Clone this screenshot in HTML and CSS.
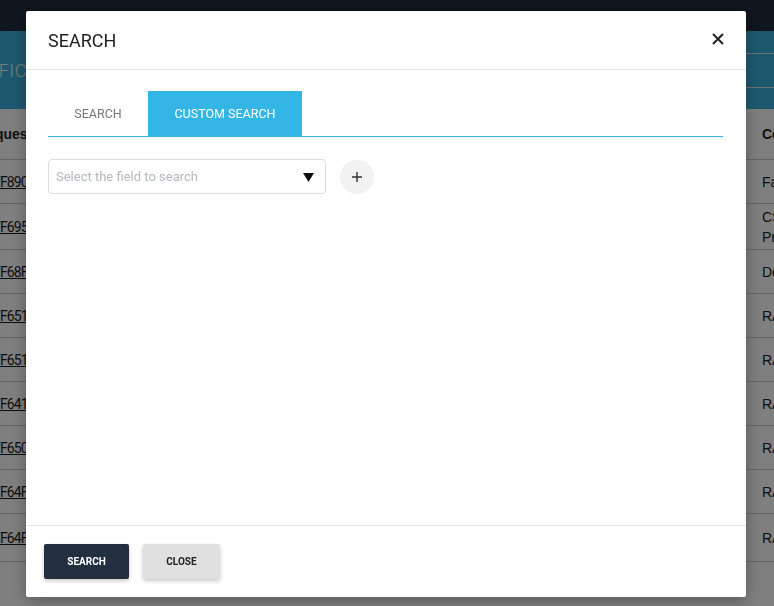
FILE: index.html
```html
<!DOCTYPE html>
<html lang="en">
<head>
    <meta charset="UTF-8">
    <meta name="viewport" content="width=device-width, initial-scale=1.0">
    <title>Certificates - Search</title>
    <link rel="stylesheet" href="styles.css">
</head>
<body>
    <div class="navbar"></div>
    <div class="page-head">
        <h1 class="page-title">CERTIFICATES</h1>
        <div class="head-tools"></div>
    </div>

    <table class="list">
        <colgroup>
            <col class="col-id">
            <col class="col-mid">
            <col class="col-type">
        </colgroup>
        <thead>
            <tr>
                <th class="th-id">Request ID</th>
                <th></th>
                <th>Certificate</th>
            </tr>
        </thead>
        <tbody>
            <tr><td><a href="#">7F890D21</a></td><td></td><td>Fabrication</td></tr>
            <tr class="tall"><td><a href="#">7F695C10</a></td><td></td><td>CS<br>Process</td></tr>
            <tr><td><a href="#">7F68F5A2</a></td><td></td><td>Document</td></tr>
            <tr><td><a href="#">7F6518B4</a></td><td></td><td>RA</td></tr>
            <tr><td><a href="#">7F6517C9</a></td><td></td><td>RA</td></tr>
            <tr><td><a href="#">7F641C03</a></td><td></td><td>RA</td></tr>
            <tr><td><a href="#">7F65038E</a></td><td></td><td>RA</td></tr>
            <tr><td><a href="#">7F64FD17</a></td><td></td><td>RA</td></tr>
            <tr class="last"><td><a href="#">7F64FA55</a></td><td></td><td>RA</td></tr>
        </tbody>
    </table>

    <div class="backdrop">
        <div class="modal">
            <div class="modal-header">
                <h2>SEARCH</h2>
                <button class="modal-close" aria-label="Close">
                    <svg width="12" height="12" viewBox="0 0 12 12">
                        <path d="M1 1 L11 11 M11 1 L1 11" stroke="#222" stroke-width="2" fill="none"/>
                    </svg>
                </button>
            </div>

            <div class="modal-body">
                <div class="tabs">
                    <button class="tab">SEARCH</button>
                    <button class="tab active">CUSTOM SEARCH</button>
                </div>

                <div class="field-row">
                    <div class="select">
                        <span class="placeholder">Select the field to search</span>
                        <svg class="caret" width="11" height="9" viewBox="0 0 11 9">
                            <polygon points="0,0 11,0 5.5,9" fill="#111"/>
                        </svg>
                    </div>
                    <button class="add-btn" aria-label="Add field">
                        <svg width="12" height="12" viewBox="0 0 12 12">
                            <path d="M6 1 V11 M1 6 H11" stroke="#333" stroke-width="1.4" fill="none"/>
                        </svg>
                    </button>
                </div>
            </div>

            <div class="modal-footer">
                <button class="btn btn-dark">SEARCH</button>
                <button class="btn btn-light">CLOSE</button>
            </div>
        </div>
    </div>
</body>
</html>
```

FILE: styles.css
```css
body {
    font-family: Roboto, "Liberation Sans", Arial, sans-serif;
    background-color: #fff;
    color: #333;
    margin: 0;
    padding: 0;
    overflow: hidden;
}

/* page behind the dialog */
.navbar {
    height: 31px;
    background-color: #202c3d;
}

.page-head {
    height: 78px;
    background-color: #3ab3dd;
    display: flex;
    align-items: center;
    justify-content: space-between;
    overflow: hidden;
}

.page-title {
    margin: 0 0 0 -52px;
    font-size: 18px;
    font-weight: 300;
    color: #f2f2f2;
    letter-spacing: 0.5px;
}

.head-tools {
    width: 60px;
    height: 33px;
    border-top: 1px solid #e4e4e4;
    border-bottom: 1px solid #e4e4e4;
}

.list {
    width: 900px;
    margin-left: -11px;
    border-collapse: collapse;
    table-layout: fixed;
    font-family: "Liberation Sans", Arial, sans-serif;
    font-size: 14px;
    color: #222;
}

.list .col-id {
    width: 200px;
}

.list .col-mid {
    width: 565px;
}

.list th {
    height: 50px;
    text-align: left;
    padding: 0 8px;
    border-bottom: 1px solid #ccc;
}

.list .th-id {
    text-indent: -20px;
}

.list td {
    height: 43px;
    padding: 0 8px;
    border-bottom: 1px solid #ccc;
    line-height: 20px;
}

.list tr.tall td {
    height: 45px;
}

.list tr.last td {
    height: 47px;
}

.list td a {
    display: inline-block;
    margin-left: -4px;
    font-family: Roboto, sans-serif;
    color: #1a1a1a;
    text-decoration: underline;
    font-size: 14px;
    letter-spacing: -0.9px;
}

/* dialog */
.backdrop {
    position: fixed;
    top: 0;
    left: 0;
    right: 0;
    bottom: 0;
    background-color: rgba(0, 0, 0, 0.5);
}

.modal {
    width: 720px;
    height: 586px;
    margin: 11px 0 0 26px;
    background-color: #fff;
    border-radius: 2px;
    display: flex;
    flex-direction: column;
    box-shadow: 0 4px 16px rgba(0, 0, 0, 0.3);
}

.modal-header {
    height: 58px;
    padding: 0 22px 0 22px;
    display: flex;
    align-items: center;
    justify-content: space-between;
    border-bottom: 1px solid #e3e3e3;
}

.modal-header h2 {
    margin: 0;
    font-size: 18px;
    font-weight: 400;
    color: #1e1e1e;
}

.modal-close {
    background: none;
    border: none;
    padding: 0;
    cursor: pointer;
    display: flex;
    margin-top: -2px;
}

.modal-body {
    flex: 1;
    padding: 21px 23px 0 22px;
}

.tabs {
    display: flex;
    border-bottom: 1px solid #33b5e5;
}

.tab {
    height: 45px;
    padding: 0;
    border: none;
    background: none;
    font-family: Roboto, sans-serif;
    font-size: 12.5px;
    color: #777;
    cursor: pointer;
    width: 100px;
}

.tab.active {
    width: 154px;
    background-color: #33b5e5;
    color: #fff;
}

.field-row {
    display: flex;
    align-items: center;
    margin-top: 22px;
}

.select {
    height: 33px;
    border: 1px solid #dcdcdc;
    border-radius: 4px;
    display: flex;
    align-items: center;
    justify-content: space-between;
    padding: 0 11px 0 7px;
    box-sizing: content-box;
    width: 258px;
}

.placeholder {
    font-size: 13px;
    color: #b3b8bf;
}

.caret {
    margin-top: 1px;
}

.add-btn {
    width: 34px;
    height: 34px;
    margin-left: 14px;
    border: none;
    border-radius: 50%;
    background-color: #f2f2f2;
    display: flex;
    align-items: center;
    justify-content: center;
    cursor: pointer;
}

.modal-footer {
    padding: 18px;
    border-top: 1px solid #e3e3e3;
    display: flex;
    gap: 14px;
}

.btn {
    height: 35px;
    border: none;
    border-radius: 2px;
    font-family: Roboto, sans-serif;
    font-size: 10px;
    font-weight: 700;
    cursor: pointer;
    box-shadow: 0 2px 4px rgba(0, 0, 0, 0.22);
}

.btn-dark {
    width: 85px;
    background-color: #232f3f;
    color: #fff;
}

.btn-light {
    width: 77px;
    background-color: #e0e0e0;
    color: #222;
}
```
